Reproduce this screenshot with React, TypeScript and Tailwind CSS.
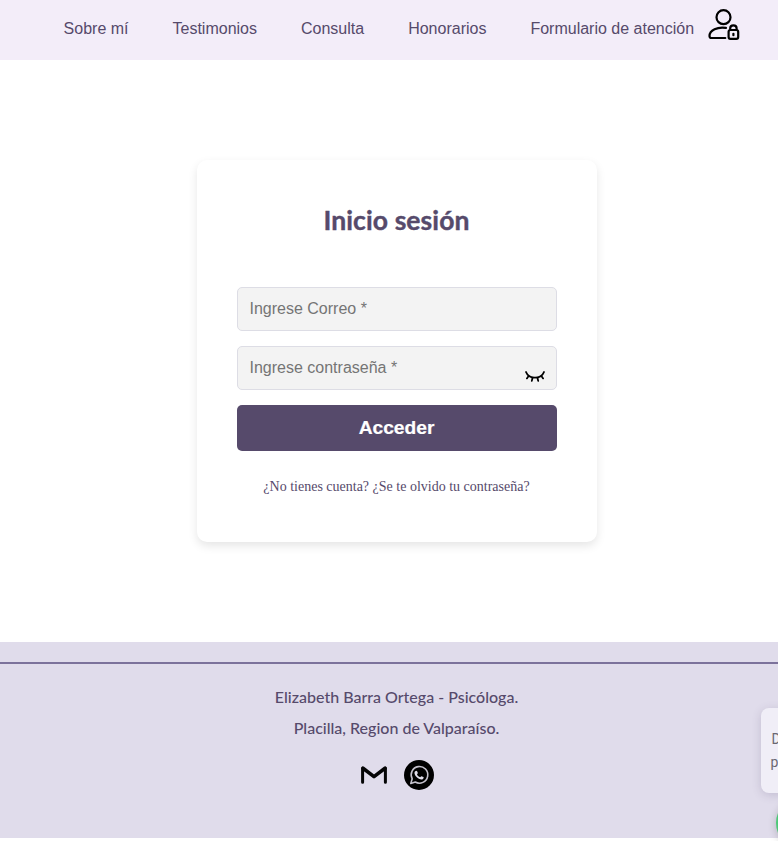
const navItems = ["Sobre mí", "Testimonios", "Consulta", "Honorarios", "Formulario de atención"];

function UserLockIcon() {
  return (
    <svg className="h-8 w-8 shrink-0" viewBox="0 0 32 32" fill="none" stroke="#000" strokeWidth="2.2" strokeLinecap="round">
      <circle cx="15.5" cy="8.2" r="7" />
      <path d="M18 18.9C9.5 17.6 1.5 21 1.5 27C1.5 28.4 2.2 29 3.4 29H17.3" />
      <rect x="20.6" y="21" width="9.6" height="8.8" rx="1.8" />
      <path d="M22.2 20.6V19.3C22.2 15.4 28.6 15.4 28.6 19.3V20.6" />
      <path d="M25.4 24.8V26.2" />
    </svg>
  );
}

function ClosedEyeIcon() {
  return (
    <svg className="h-3 w-5" viewBox="0 0 20 12" fill="none" stroke="#000" strokeWidth="1.8" strokeLinecap="round">
      <path d="M1 1C4 8.6 16 8.6 19 1" />
      <path d="M3.6 5L1.9 7.4M7.6 6.7L6.8 9.9M12.4 6.7L13.2 9.9M16.4 5L18.1 7.4" />
    </svg>
  );
}

function MailIcon() {
  return (
    <svg className="h-[30px] w-[30px]" viewBox="0 0 30 30" fill="none" stroke="#050506" strokeLinecap="round" strokeLinejoin="round">
      <path strokeWidth="3" d="M3.6 22.3V8.3M26.4 22.3V8.3" />
      <path strokeWidth="3.6" d="M4 8.2L15 16.6L26 8.2" />
    </svg>
  );
}

function WhatsappIcon() {
  return (
    <svg className="h-[30px] w-[30px]" viewBox="0 0 30 30">
      <circle cx="15" cy="15" r="15" fill="#000" />
      <path d="M6.8 23.4L8.2 18.8A8.3 8.3 0 1 1 11.3 22Z" fill="none" stroke="#c4c1cc" strokeWidth="1.6" strokeLinejoin="round" />
      <path d="M11.3 11.2C12 10.4 12.8 10.5 13.1 11.2L13.8 12.8C14 13.4 13.1 14 13 14.4C13.7 15.8 14.8 16.7 16.1 17.2C16.6 17 17 16 17.5 16.2L19.4 17.1C20.2 17.6 19.3 19.2 18.2 19.5C14.8 20.1 10 15.6 10.5 12.6C10.6 12 10.9 11.6 11.3 11.2Z" fill="#e1deeb" />
    </svg>
  );
}

export default function App() {
  return (
    <div className="relative h-[841px] w-full overflow-hidden bg-white font-['Liberation_Sans',sans-serif] text-[#564a6b]">
      <div className="w-[793px]">
        <header className="flex h-[60px] bg-[#f3edf9] pl-[63.6px]">
          <nav className="flex h-[57px] items-center gap-11 whitespace-nowrap text-base">
            {navItems.map((item) => (
              <a key={item}>{item}</a>
            ))}
          </nav>
          <div className="ml-[14.4px] mt-[9px]">
            <UserLockIcon />
          </div>
        </header>

        <main className="flex h-[582px] items-start justify-center pt-[100px]">
          <form className="flex h-[382px] w-[400px] flex-col rounded-[10px] bg-white px-10 pt-10 shadow-[0_4px_10px_rgba(0,0,0,0.1)]">
            <h1 className="h-[87px] text-center font-['Lato',sans-serif] text-[26.5px] font-bold leading-10 tracking-[0.1px] [-webkit-text-stroke:0.4px_#564a6b]">
              Inicio sesión
            </h1>
            <input
              type="email"
              placeholder="Ingrese Correo *"
              className="h-11 w-full rounded-[5px] border border-[#dddde5] bg-[#f3f3f3] px-3 pb-px text-base placeholder:text-[#757575]"
            />
            <div className="relative mt-[15px]">
              <input
                type="password"
                placeholder="Ingrese contraseña *"
                className="block h-11 w-full rounded-[5px] border border-[#dddde5] bg-[#f3f3f3] px-3 pb-px text-base placeholder:text-[#757575]"
              />
              <span className="absolute right-3 top-[25px]">
                <ClosedEyeIcon />
              </span>
            </div>
            <button type="button" className="mt-[15px] h-[46px] rounded-[5px] bg-[#564a6b] text-[19.2px] font-bold text-white [-webkit-text-stroke:0.2px_#fff]">
              Acceder
            </button>
            <p className="mt-[26px] whitespace-nowrap text-center font-['Liberation_Serif',serif] text-sm leading-5">
              ¿No tienes cuenta? ¿Se te olvido tu contraseña?
            </p>
          </form>
        </main>

        <footer className="h-[196px] bg-[#e0dceb] pt-5 font-['Lato',sans-serif]">
          <div className="border-t-2 border-[#7c729b] pt-[17px] text-center text-base font-medium leading-[31px]">
            <p>Elizabeth Barra Ortega - Psicóloga.</p>
            <p>Placilla, Region de Valparaíso.</p>
          </div>
          <div className="mt-[17px] flex justify-center gap-[15px] pr-px">
            <MailIcon />
            <WhatsappIcon />
          </div>
        </footer>
      </div>

      <aside className="absolute left-[761px] top-[708px] h-[85px] w-[220px] rounded-[8px] bg-[#f0eef7] pl-[9.5px] pt-5 font-['Roboto',sans-serif] text-sm leading-[23px] text-[#6b6872] shadow-[0_2px_10px_rgba(80,70,110,0.2)]">
        <p className="pl-px">D</p>
        <p>p</p>
      </aside>
      <div className="absolute left-[776px] top-[797px] h-[52px] w-[52px] rounded-full bg-[#4dc978] shadow-[0_2px_8px_rgba(0,0,0,0.2)]" />
    </div>
  );
}
